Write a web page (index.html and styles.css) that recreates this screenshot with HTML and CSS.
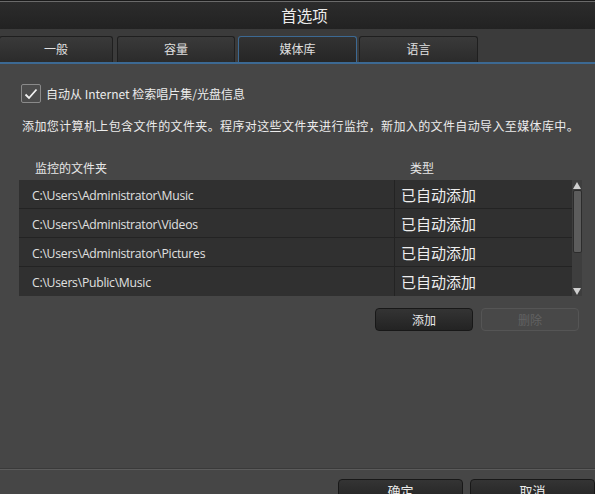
FILE: index.html
```html
<!DOCTYPE html>
<html lang="zh-CN">
<head>
<meta charset="utf-8">
<title>首选项</title>
<link rel="stylesheet" href="styles.css">
</head>
<body>
<div class="window">
  <div class="titlebar">首选项</div>
  <div class="tabbar">
    <div class="tab t1">一般</div>
    <div class="tab t2">容量</div>
    <div class="tab t3 active">媒体库</div>
    <div class="tab t4">语言</div>
  </div>
  <div class="content">
    <label class="check-row">
      <span class="checkbox">
        <svg width="14" height="12" viewBox="0 0 14 12"><path d="M1.5 6.5 L5 10 L12.5 1.5" fill="none" stroke="#f2f2f2" stroke-width="1.8"/></svg>
      </span>
      <span class="check-label">自动从 Internet 检索唱片集/光盘信息</span>
    </label>
    <p class="desc">添加您计算机上包含文件的文件夹。程序对这些文件夹进行监控，新加入的文件自动导入至媒体库中。</p>
    <div class="thead">
      <span class="th-folder">监控的文件夹</span>
      <span class="th-type">类型</span>
    </div>
    <div class="table-wrap">
      <div class="table">
        <div class="row"><span class="c-path">C:\Users\Administrator\Music</span><span class="c-type">已自动添加</span></div>
        <div class="row"><span class="c-path">C:\Users\Administrator\Videos</span><span class="c-type">已自动添加</span></div>
        <div class="row"><span class="c-path">C:\Users\Administrator\Pictures</span><span class="c-type">已自动添加</span></div>
        <div class="row"><span class="c-path">C:\Users\Public\Music</span><span class="c-type">已自动添加</span></div>
      </div>
      <div class="scrollbar">
        <span class="arrow up"></span>
        <span class="thumb"></span>
        <span class="arrow down"></span>
      </div>
    </div>
    <div class="actions">
      <button class="btn">添加</button>
      <button class="btn disabled">删除</button>
    </div>
  </div>
  <div class="footer">
    <button class="btn fbtn ok">确定</button>
    <button class="btn fbtn cancel">取消</button>
  </div>
</div>
</body>
</html>
```

FILE: styles.css
```css
* { box-sizing: border-box; }
html, body {
  margin: 0;
  padding: 0;
  width: 595px;
  height: 494px;
  overflow: hidden;
  background: #464646;
  font-family: "Noto Sans CJK SC", "Noto Sans", sans-serif;
  color: #e8e8e8;
}
.window {
  width: 595px;
  height: 494px;
  display: flex;
  flex-direction: column;
  background: #464646;
}
.titlebar {
  height: 29px;
  flex: none;
  background: linear-gradient(#2c2c2c, #222222);
  border-top: 1px solid #1a1a1a;
  box-shadow: inset 0 1px 0 #6a6a6a;
  text-align: center;
  font-size: 15.5px;
  line-height: 28px;
  color: #ececec;
  padding-left: 14px;
}
.tabbar {
  height: 35px;
  flex: none;
  background: #3b3b3b;
  border-bottom: 2px solid #3c6993;
  display: flex;
  align-items: flex-end;
  padding-top: 7px;
}
.tab {
  height: 26px;
  background: linear-gradient(#3a3a3a, #2b2b2b);
  border: 1px solid #1f1f1f;
  border-bottom: none;
  border-radius: 3px 3px 0 0;
  text-align: center;
  font-size: 12px;
  line-height: 24px;
  color: #e0e0e0;
}
.t1 { width: 114px; margin-left: -1px; }
.t2 { width: 118px; margin-left: 4px; }
.t3 { width: 119px; margin-left: 3px; }
.t4 { width: 119px; margin-left: 2px; }
.tab.active {
  border: 1px solid #3c6993;
  border-bottom: none;
  background: linear-gradient(#323232, #262626);
}
.content {
  flex: 1;
  padding: 20px 13px 0 19px;
  display: flex;
  flex-direction: column;
}
.check-row {
  display: flex;
  align-items: center;
  margin-left: 2px;
  height: 19px;
}
.checkbox {
  width: 20px;
  height: 19px;
  border: 1px solid #8a8a8a;
  border-radius: 2px;
  background: #4c4c4c;
  display: flex;
  align-items: center;
  justify-content: center;
  margin-right: 5px;
}
.check-label {
  font-size: 12px;
  color: #ececec;
}
.desc {
  margin: 14px 0 0 3px;
  font-size: 12px;
  letter-spacing: 0.38px;
  line-height: 18px;
  color: #ececec;
  white-space: nowrap;
}
.thead {
  display: flex;
  margin-top: 24px;
  height: 17px;
  font-size: 12px;
  line-height: 17px;
  color: #e6e6e6;
}
.th-folder { width: 391px; padding-left: 16px; }
.th-type { padding-left: 0; }
.table-wrap {
  display: flex;
  margin-top: 4px;
  height: 116px;
}
.table {
  width: 553px;
  background: #303030;
}
.row {
  display: flex;
  height: 29px;
  border-bottom: 1px solid #232323;
  align-items: stretch;
}
.row:last-child { border-bottom: none; }
.c-path {
  width: 376px;
  border-right: 1px solid #232323;
  padding-left: 13px;
  padding-top: 2px;
  display: flex;
  align-items: center;
  font-family: "Open Sans", "Noto Sans", sans-serif;
  font-size: 12.2px;
  letter-spacing: -0.25px;
  color: #e0e0e0;
}
.c-type {
  padding-left: 6px;
  display: flex;
  align-items: center;
  font-size: 15px;
  color: #eeeeee;
}
.scrollbar {
  width: 10px;
  background: #3e3e3e;
  display: flex;
  flex-direction: column;
  align-items: center;
  padding-top: 2px;
}
.arrow {
  width: 0;
  height: 0;
  border-left: 4px solid transparent;
  border-right: 4px solid transparent;
}
.arrow.up { border-bottom: 7px solid #cfcfcf; }
.thumb {
  width: 9px;
  height: 63px;
  margin-top: 1px;
  background: #5c5c5c;
  border: 1px solid #2c2c2c;
  border-radius: 2px;
}
.arrow.down {
  border-top: 7px solid #cfcfcf;
  margin-top: auto;
  margin-bottom: 1px;
}
.actions {
  display: flex;
  justify-content: flex-end;
  gap: 8px;
  margin-top: 12px;
  padding-right: 3px;
}
.btn {
  font-family: "Noto Sans CJK SC", sans-serif;
  width: 98px;
  height: 23px;
  border: 1px solid #181818;
  border-radius: 4px;
  background: linear-gradient(#343434, #232323);
  color: #eaeaea;
  font-size: 12px;
  line-height: 20px;
  padding: 0;
}
.btn.disabled {
  background: #484848;
  border-color: #555555;
  color: #626262;
}
.footer {
  flex: none;
  height: 25px;
  border-top: 1px solid #5c5c5c;
  box-shadow: 0 -1px 0 #3a3a3a;
  display: flex;
  align-items: flex-start;
  padding-top: 9px;
  padding-left: 338px;
  gap: 7px;
}
.fbtn {
  height: 24px;
  font-size: 13px;
}
.ok { width: 129px; }
.cancel { width: 125px; flex: none; }
```
